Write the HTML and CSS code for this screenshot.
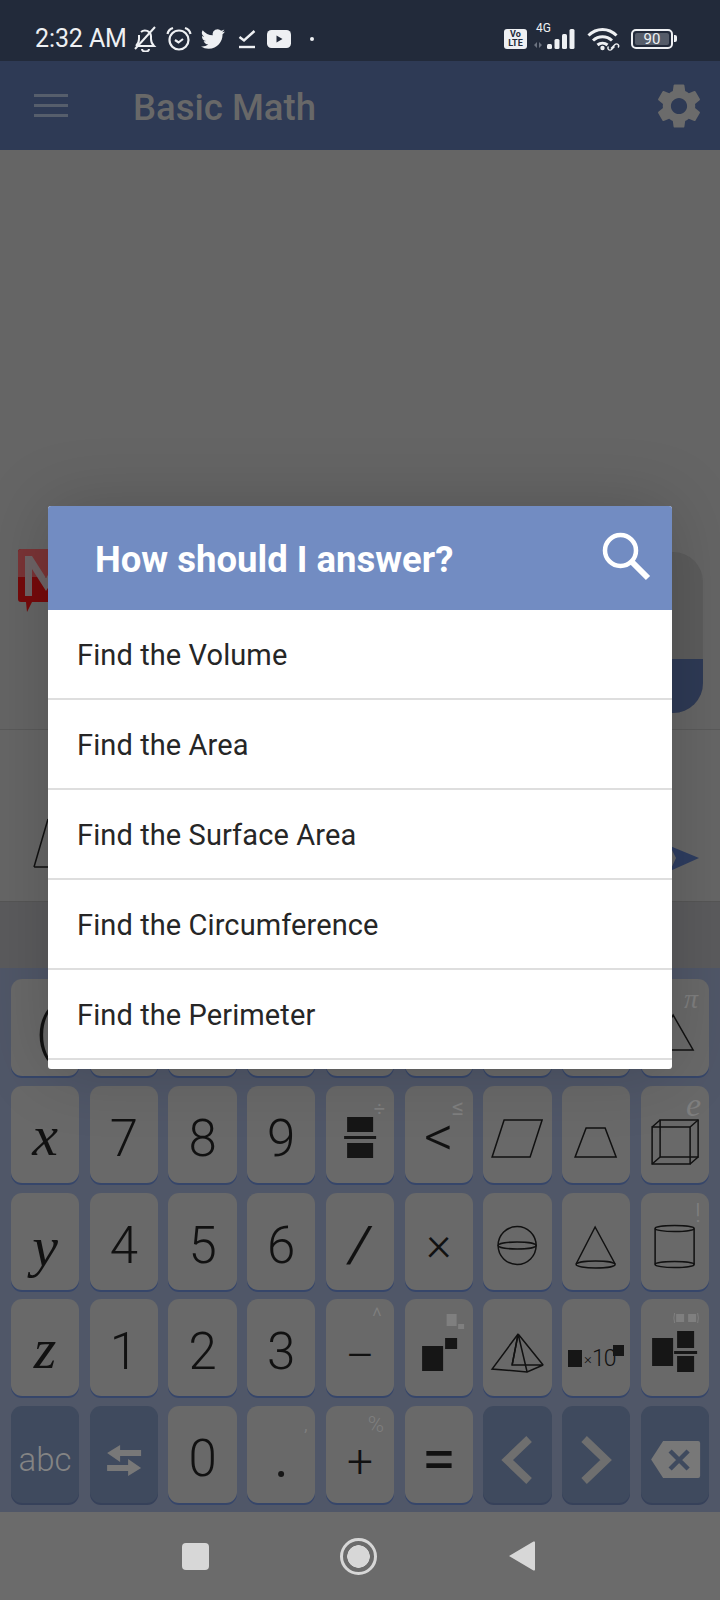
FILE: index.html
```html
<!DOCTYPE html>
<html lang="en">
<head>
<meta charset="utf-8">
<title>Basic Math</title>
<link rel="stylesheet" href="styles.css">
</head>
<body>
<div class="phone">
  <header class="status">
    <span class="time">2:32 AM</span>
    <svg class="i-bell" viewBox="0 0 24 26" fill="none" stroke="#eef0f3" stroke-width="2"><path d="M4 20h17c-2-2-3-4-3-7V10a6 6 0 0 0-10-4M6 9v4c0 3-1 5-3 7"/><path d="M22 1 2 23"/><path d="M9 23a3.500 2.500 0 0 0 7 0"/></svg>
    <svg class="i-alarm" viewBox="0 0 26 26" fill="none" stroke="#eef0f3" stroke-width="2.200"><circle cx="13" cy="14" r="9.500"/><path d="m9 14 3.500 2.500L17 13"/><path d="M1.500 8C2 5 4 3 7 2M24.500 8C24 5 22 3 19 2"/></svg>
    <svg class="i-tw" viewBox="0 0 24 24" fill="#eef0f3"><path d="M23.950 4.570a10 10 0 0 1-2.820.770 4.960 4.960 0 0 0 2.160-2.720c-.950.550-2 .950-3.120 1.180a4.920 4.920 0 0 0-8.380 4.480A13.960 13.960 0 0 1 1.670 3.150a4.920 4.920 0 0 0 1.520 6.570 4.900 4.900 0 0 1-2.230-.610v.060a4.920 4.920 0 0 0 3.950 4.830 4.900 4.900 0 0 1-2.220.080 4.930 4.930 0 0 0 4.600 3.420A9.870 9.870 0 0 1 0 19.540a13.940 13.940 0 0 0 7.550 2.210c9.050 0 14-7.500 14-13.980 0-.210 0-.420-.020-.630a9.940 9.940 0 0 0 2.460-2.550z"/></svg>
    <svg class="i-check" viewBox="0 0 18 20" fill="none" stroke="#eef0f3" stroke-width="2.400"><path d="m1.500 8 4.500 3.500L16.500 2"/><path d="M1 18h16"/></svg>
    <svg class="i-yt" viewBox="0 0 24 18"><rect width="24" height="18" rx="4.500" fill="#eef0f3"/><path d="m9.500 5.500 6 3.500-6 3.500z" fill="#222a3a"/></svg>
    <span class="dot"></span>
    <span class="status-gap"></span>
    <span class="volte"><span>Vo</span><span>LTE</span></span>
    <span class="net">
      <span class="net-g">4G</span>
      <svg class="i-sig" viewBox="0 0 44 22" fill="#eef0f3"><path d="M0 17l3-3v6zM5 14l3 3-3 3z" fill="#6c7380"/><rect x="13" y="16" width="5" height="5" rx="1.500"/><rect x="20.500" y="11" width="5" height="10" rx="1.500"/><rect x="28" y="6" width="5" height="15" rx="1.500"/><rect x="35.500" y="1" width="5" height="20" rx="1.500"/></svg>
    </span>
    <svg class="i-wifi" viewBox="0 0 34 24" fill="none" stroke="#eef0f3" stroke-width="3"><path d="M1.500 8.500c8-8 20-8 28 0M6 13.500c5.500-5 13.500-5 19 0M10.500 18c3-2.500 7-2.500 10 0"/><circle cx="15.500" cy="21" r="2.200" fill="#eef0f3" stroke="none"/><path d="M24 21.500l4-4a2 2 0 0 1 3 3M27.500 19.500l-3 3a2 2 0 0 1-3-3" stroke-width="1.400"/></svg>
    <span class="batt"><span class="batt-box"><span class="batt-num">90</span></span><span class="batt-nub"></span></span>
  </header>

  <nav class="toolbar">
    <span class="burger"><i></i><i></i><i></i></span>
    <span class="title">Basic Math</span>
    <svg class="gear" viewBox="0 0 24 24" fill="#6b6b6b"><path d="M19.140 12.940c.040-.300.060-.610.060-.940 0-.320-.020-.640-.070-.940l2.030-1.580c.180-.140.230-.410.120-.610l-1.920-3.320c-.120-.220-.370-.290-.590-.220l-2.390.960c-.500-.380-1.030-.700-1.620-.940l-.360-2.540c-.040-.240-.240-.410-.480-.410h-3.840c-.240 0-.430.170-.470.410l-.360 2.540c-.590.240-1.130.570-1.620.940l-2.390-.960c-.220-.080-.470 0-.590.220L2.740 8.870c-.120.210-.080.470.120.610l2.030 1.580c-.050.300-.090.630-.090.940s.020.640.070.940l-2.030 1.580c-.180.140-.230.410-.120.610l1.920 3.320c.120.220.370.290.590.220l2.390-.960c.500.380 1.030.700 1.620.940l.360 2.540c.050.240.240.410.480.410h3.840c.240 0 .440-.170.470-.410l.360-2.540c.590-.240 1.130-.560 1.620-.94l2.390.96c.220.080.470 0 .590-.22l1.920-3.320c.120-.220.070-.47-.12-.61l-2.010-1.580zM12 15.600c-1.980 0-3.600-1.620-3.600-3.600s1.620-3.600 3.600-3.600 3.600 1.620 3.600 3.600-1.620 3.600-3.600 3.600z"/></svg>
  </nav>

  <main class="content">
    <section class="chat">
      <svg class="logo" viewBox="0 0 60 64"><path d="M3 0h54a3 3 0 0 1 3 3v47a3 3 0 0 1-3 3H14l-5 10-1-10H3a3 3 0 0 1-3-3V3a3 3 0 0 1 3-3z" fill="#760a0b"/><path d="M3 0h54a3 3 0 0 1 3 3v25H0V3a3 3 0 0 1 3-3z" fill="#7a3436"/><path d="M7 7h7l14 22L42 7h7v40h-7V20L28 42 14 20v27H7z" fill="#6e6466"/></svg>
      <div class="card"><div class="card-top"></div><div class="card-bottom"></div></div>
    </section>
    <section class="input">
      <svg class="shape" viewBox="0 0 40 50" fill="none" stroke="#111" stroke-width="1.500"><path d="M1 49 15 1M1 49h38"/></svg>
      <svg class="send" viewBox="0 0 30 26" fill="#2e3d60"><path d="M0 0 29 12 0 25 6 12z"/></svg>
    </section>
    <section class="hint"></section>
  </main>

  <section class="keyboard">
    <button class="key paren">(</button>
    <button class="key"></button>
    <button class="key"></button>
    <button class="key"></button>
    <button class="key"></button>
    <button class="key"></button>
    <button class="key"></button>
    <button class="key"></button>
    <button class="key"><sup class="sub sub-pi">π</sup><svg class="art" viewBox="0 0 68 97" fill="none" stroke="#111" stroke-width="1.500"><path d="M32 36 12 71h40z"/></svg></button>

    <button class="key var">x</button>
    <button class="key">7</button>
    <button class="key">8</button>
    <button class="key">9</button>
    <button class="key"><sup class="sub sub-div">÷</sup><svg class="art" viewBox="0 0 68 97" fill="#161616"><rect x="21" y="31" width="26" height="15"/><rect x="18" y="50" width="32" height="3"/><rect x="21" y="57" width="26" height="15"/></svg></button>
    <button class="key op op-lt">&lt;<sup class="sub sub-le">≤</sup></button>
    <button class="key"><svg class="art" viewBox="0 0 68 97" fill="none" stroke="#111" stroke-width="1.500"><path d="M9 71 21 34h38L47 71z"/></svg></button>
    <button class="key"><svg class="art" viewBox="0 0 68 97" fill="none" stroke="#111" stroke-width="1.500"><path d="M13 71 24 42h19l11 29z"/></svg></button>
    <button class="key"><sup class="sub sub-e">e</sup><svg class="art" viewBox="0 0 68 97" fill="none" stroke="#111" stroke-width="1.500"><rect x="11" y="41" width="38" height="37"/><rect x="19" y="34" width="38" height="37"/><path d="m11 41 8-7M49 41l8-7M11 78l8-7M49 78l8-7"/></svg></button>

    <button class="key var var-y">y</button>
    <button class="key">4</button>
    <button class="key">5</button>
    <button class="key">6</button>
    <button class="key op"><span class="slash">/</span></button>
    <button class="key op op-times">×</button>
    <button class="key"><svg class="art" viewBox="0 0 68 97" fill="none" stroke="#111" stroke-width="1.500"><circle cx="34" cy="52.500" r="19"/><ellipse cx="34" cy="52.500" rx="19" ry="3.500"/></svg></button>
    <button class="key"><svg class="art" viewBox="0 0 68 97" fill="none" stroke="#111" stroke-width="1.500"><path d="M14 71 33 34l20 37"/><ellipse cx="33.500" cy="71.500" rx="19.500" ry="3.500"/></svg></button>
    <button class="key"><sup class="sub sub-ex">!</sup><svg class="art" viewBox="0 0 68 97" fill="none" stroke="#111" stroke-width="1.500"><ellipse cx="33.500" cy="35.500" rx="19.500" ry="3"/><ellipse cx="33.500" cy="71.500" rx="19.500" ry="3"/><path d="M14 35.500v36M53 35.500v36"/></svg></button>

    <button class="key var var-z">z</button>
    <button class="key">1</button>
    <button class="key">2</button>
    <button class="key">3</button>
    <button class="key op op-minus">–<sup class="sub sub-caret">^</sup></button>
    <button class="key"><svg class="art" viewBox="0 0 68 97"><rect x="17" y="47" width="21" height="25" fill="#161616"/><rect x="40" y="39" width="12" height="11" fill="#161616"/><rect x="41.500" y="15" width="10" height="12" fill="#7f7f7f"/><rect x="53" y="25" width="6" height="5" fill="#7f7f7f"/></svg></button>
    <button class="key"><svg class="art" viewBox="0 0 68 97" fill="none" stroke="#111" stroke-width="1.500"><path d="M35 35 9 70l35 3 16-7H29z"/><path d="M35 35 29 66M35 35l9 38M35 35l25 31"/></svg></button>
    <button class="key ten"><span class="ten-box"></span><span class="ten-x">×</span><span class="ten-num">10</span><span class="ten-sup"></span></button>
    <button class="key"><svg class="art" viewBox="0 0 68 97"><rect x="11" y="39" width="21" height="28" fill="#161616"/><rect x="36" y="32" width="17" height="17" fill="#161616"/><rect x="33" y="52" width="23" height="3" fill="#161616"/><rect x="36" y="57" width="17" height="16" fill="#161616"/><rect x="35" y="15" width="8" height="8" fill="#7f7f7f"/><rect x="47" y="15" width="8" height="8" fill="#7f7f7f"/><path d="M33.500 14q-1.500 5 0 10M56.500 14q1.500 5 0 10" fill="none" stroke="#7f7f7f"/></svg></button>

    <button class="key dark abc">abc</button>
    <button class="key dark"><svg class="art" viewBox="0 0 68 97" fill="#787878"><path d="M17 47 30 39v5h21v6H30v6z"/><path d="M51 62 38 70v-5H17v-6h21v-6z"/></svg></button>
    <button class="key">0</button>
    <button class="key"><sup class="sub sub-comma">,</sup><svg class="art" viewBox="0 0 68 97"><circle cx="34" cy="68" r="3" fill="#161616"/></svg></button>
    <button class="key op op-plus">+<sup class="sub sub-pct">%</sup></button>
    <button class="key eq">=</button>
    <button class="key dark"><svg class="art" viewBox="0 0 68 97" fill="none" stroke="#6f6f6f" stroke-width="8"><path d="M46 33 24 54l22 21"/></svg></button>
    <button class="key dark"><svg class="art" viewBox="0 0 68 97" fill="none" stroke="#6f6f6f" stroke-width="8"><path d="m22 33 22 21-22 21"/></svg></button>
    <button class="key dark"><svg class="art" viewBox="0 0 68 97"><path d="M22 35h35a2 2 0 0 1 2 2v33a2 2 0 0 1-2 2H22L10 53.500z" fill="#787878"/><path d="m29 45 18 18M47 45 29 63" stroke="#3f4a5e" stroke-width="4.500" fill="none"/></svg></button>
  </section>

  <footer class="navbar">
    <span class="nav-square"></span>
    <span class="nav-home"></span>
    <svg class="nav-back" viewBox="0 0 26 30" fill="#d7d7d7"><path d="M0 15 24.500.600a1 1 0 0 1 1.500.900v27a1 1 0 0 1-1.500.900z"/></svg>
  </footer>

  <div class="dialog">
    <div class="dialog-head">
      <h2 class="dialog-title">How should I answer?</h2>
      <svg class="search" viewBox="0 0 50 50" fill="none" stroke="#fff"><circle cx="19.500" cy="19.500" r="15.500" stroke-width="4.500"/><path d="m31 31 16 16" stroke-width="6"/></svg>
    </div>
    <ul class="options">
      <li>Find the Volume</li>
      <li>Find the Area</li>
      <li>Find the Surface Area</li>
      <li>Find the Circumference</li>
      <li>Find the Perimeter</li>
    </ul>
  </div>
</div>
</body>
</html>
```

FILE: styles.css
```css
* { box-sizing: border-box; }
html, body { margin: 0; padding: 0; }
body { width: 720px; height: 1600px; overflow: hidden; font-family: Roboto, "Liberation Sans", sans-serif; background: #656565; }
svg { display: block; flex: none; }
.phone { position: relative; width: 720px; height: 1600px; display: flex; flex-direction: column; overflow: hidden; }

.status { height: 61px; flex: none; background: #222a3a; color: #eef0f3; display: flex; align-items: center; padding: 16px 43px 0 35px; }
.time { font-size: 25px; width: 91px; white-space: nowrap; letter-spacing: -.1px; }
.i-bell { width: 24px; height: 26px; margin-left: 7px; }
.i-alarm { width: 26px; height: 26px; margin-left: 9px; }
.i-tw { width: 24px; height: 24px; margin-left: 9px; }
.i-check { width: 18px; height: 20px; margin-left: 13px; }
.i-yt { width: 24px; height: 18px; margin-left: 11px; }
.dot { width: 4px; height: 4px; border-radius: 50%; background: #eef0f3; margin-left: 19px; }
.status-gap { flex: 1; }
.volte { width: 23px; height: 20px; border-radius: 3px; background: #eef0f3; color: #222a3a; font-size: 9px; font-weight: 700; line-height: 9px; display: flex; flex-direction: column; align-items: center; justify-content: center; }
.net { position: relative; width: 44px; height: 22px; margin-left: 7px; }
.net-g { position: absolute; left: 2px; top: -6px; font-size: 12px; line-height: 12px; }
.i-sig { width: 44px; height: 22px; }
.i-wifi { width: 34px; height: 24px; margin-left: 9px; }
.batt { display: flex; align-items: center; margin-left: 10px; }
.batt-box { width: 42px; height: 20px; border: 2px solid #eef0f3; border-radius: 5px; padding: 2px; display: flex; }
.batt-num { flex: 1; background: #555c69; border-radius: 2px; font-size: 15px; line-height: 12px; text-align: center; color: #eef0f3; }
.batt-nub { width: 3px; height: 7px; background: #eef0f3; margin-left: 1px; border-radius: 0 2px 2px 0; }

.toolbar { height: 89px; flex: none; background: #2e3a55; display: flex; align-items: center; padding: 0 14px 0 34px; }
.burger { width: 34px; display: flex; flex-direction: column; gap: 7px; }
.burger i { display: block; height: 3px; background: #565e6c; }
.title { margin: 3px 0 0 65px; font-size: 36.500px; font-weight: 500; color: #686868; white-space: nowrap; }
.gear { width: 54px; height: 54px; margin-left: auto; }

.content { flex: 1; display: flex; flex-direction: column; background: #656565; min-height: 0; }
.chat { flex: 1; display: flex; align-items: flex-end; justify-content: space-between; padding: 0 17px 16px 18px; border-bottom: 1px solid #5a5a5a; }
.logo { width: 60px; height: 64px; margin-bottom: 100px; }
.card { width: 400px; height: 161px; border-radius: 30px; overflow: hidden; display: flex; flex-direction: column; background: #5c5c5c; }
.card-top { flex: 1; }
.card-bottom { height: 54px; background: #2e3a55; }
.input { height: 172px; flex: none; display: flex; justify-content: space-between; align-items: flex-start; padding: 91px 20px 0 33px; border-bottom: 1px solid #565656; background: #666666; }
.shape { width: 40px; height: 50px; margin-top: -3px; }
.send { width: 30px; height: 26px; margin-top: 25px; }
.hint { height: 66px; flex: none; background: #5b5b5d; }

.keyboard { height: 544px; flex: none; background: #505768; display: grid; grid-template-columns: repeat(9, 1fr); grid-auto-rows: 97px; column-gap: 10.500px; row-gap: 9.750px; padding: 11px 11px 9px; }
.key { position: relative; border: 0; padding: 8px 0 0; margin: 0; background: #696969; border-radius: 11px; box-shadow: 0 2px 0 #36466a; color: #111; font-family: Roboto, "Liberation Sans", sans-serif; font-size: 51px; font-weight: 300; line-height: 1; display: flex; align-items: center; justify-content: center; overflow: visible; }
.key.dark { background: #3f4a5e; box-shadow: 0 2px 0 #36415a; }
.art { position: absolute; left: 0; top: 0; width: 100%; height: 100%; }
.paren { font-size: 60px; padding: 8px 0 0 0; }
.key.var { font-family: "Liberation Serif", serif; font-style: italic; font-size: 58px; font-weight: 400; padding-top: 4px; }
.key.var-y { padding-top: 12px; }
.key.var-z { padding-top: 2px; }
.op { font-size: 46px; }
.op-lt { font-size: 58px; padding-top: 4px; }
.op-times { font-size: 48px; padding-top: 6px; }
.op-minus { font-size: 44px; padding-top: 16px; }
.op-plus { font-size: 46px; padding-top: 12px; }
.slash { display: inline-block; font-size: 50px; transform: scaleX(1.5); }
.eq { font-size: 62px; font-weight: 400; }
.key.abc { font-size: 33px; color: #848484; padding-top: 10px; }
.sub { position: absolute; font-weight: 400; color: #7f7f7f; line-height: 1; vertical-align: baseline; font-family: Roboto, "Liberation Sans", sans-serif; }
.sub-pi { right: 11px; top: 6px; font-size: 28px; font-family: "Liberation Serif", serif; font-style: italic; }
.sub-div { right: 9px; top: 13px; font-size: 20px; }
.sub-le { right: 9px; top: 9px; font-size: 24px; }
.sub-e { right: 8px; top: 2px; font-size: 34px; font-family: "Liberation Serif", serif; font-style: italic; }
.sub-ex { right: 8px; top: 7px; font-size: 26px; font-weight: 300; }
.sub-caret { right: 12px; top: 6px; font-size: 24px; font-weight: 300; }
.sub-comma { right: 8px; top: 12px; font-size: 16px; }
.sub-pct { right: 10px; top: 8px; font-size: 22px; font-weight: 300; }
.ten { padding: 8px 0 0 0; justify-content: flex-start; }
.ten-box { position: absolute; left: 6px; top: 51px; width: 14px; height: 17px; background: #161616; }
.ten-x { position: absolute; left: 22px; top: 53px; font-size: 15px; }
.ten-num { position: absolute; left: 30px; top: 48px; font-size: 23px; letter-spacing: -1px; }
.ten-sup { position: absolute; left: 51px; top: 46px; width: 11px; height: 11px; background: #161616; }

.navbar { height: 88px; flex: none; background: #6b6b6b; display: flex; align-items: center; padding: 0 0 0 182px; }
.nav-square { width: 27px; height: 27px; border-radius: 4px; background: #d7d7d7; }
.nav-home { width: 37px; height: 37px; border-radius: 50%; border: 3px solid #d7d7d7; margin-left: 131px; position: relative; background: radial-gradient(circle, #d7d7d7 0 11px, #6b6b6b 11.500px); }
.nav-back { width: 26px; height: 30px; margin-left: 132px; }

.dialog { position: absolute; left: 48px; top: 506px; width: 624px; height: 563px; background: #fff; border-radius: 3px; overflow: hidden; box-shadow: 0 0 70px rgba(0,0,0,.18); }
.dialog-head { height: 104px; background: #728cc2; display: flex; align-items: center; justify-content: space-between; padding: 0 21px 0 47px; }
.dialog-title { margin: 2px 0 0; font-size: 36.500px; font-weight: 700; color: #fff; white-space: nowrap; }
.search { width: 50px; height: 50px; margin-top: -4px; }
.options { list-style: none; margin: 0; padding: 0; }
.options li { height: 90px; padding: 1px 0 0 29px; border-bottom: 2px solid #dedede; display: flex; align-items: center; font-size: 29px; letter-spacing: .1px; color: #262626; }
```
